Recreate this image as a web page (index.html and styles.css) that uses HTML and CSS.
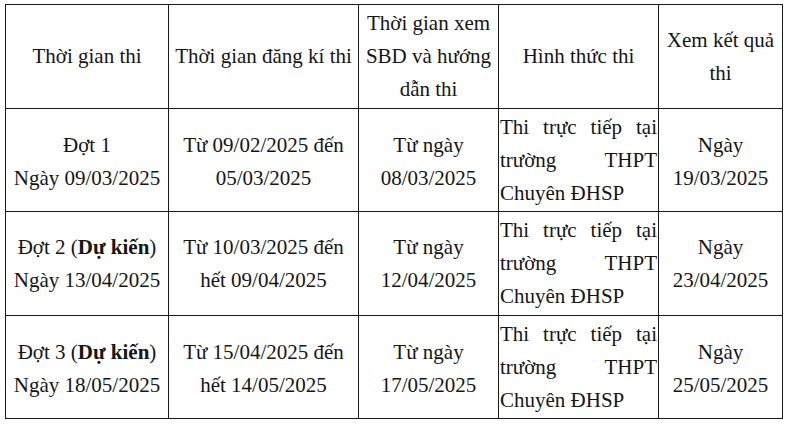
FILE: index.html
```html
<!DOCTYPE html>
<html lang="vi">
<head>
<meta charset="utf-8">
<link rel="stylesheet" href="styles.css">
</head>
<body>
<table class="schedule">
  <colgroup>
    <col class="c1"><col class="c2"><col class="c3"><col class="c4"><col class="c5">
  </colgroup>
  <tr class="head">
    <td>Thời gian thi</td>
    <td>Thời gian đăng kí thi</td>
    <td>Thời gian xem SBD và hướng dẫn thi</td>
    <td>Hình thức thi</td>
    <td>Xem kết quả thi</td>
  </tr>
  <tr class="short">
    <td>Đợt 1<br>Ngày 09/03/2025</td>
    <td>Từ 09/02/2025 đến<br>05/03/2025</td>
    <td>Từ ngày<br>08/03/2025</td>
    <td class="just">Thi trực tiếp tại trường THPT Chuyên ĐHSP</td>
    <td>Ngày<br>19/03/2025</td>
  </tr>
  <tr class="tall">
    <td>Đợt 2 (<b>Dự kiến</b>)<br>Ngày 13/04/2025</td>
    <td>Từ 10/03/2025 đến<br>hết 09/04/2025</td>
    <td>Từ ngày<br>12/04/2025</td>
    <td class="just">Thi trực tiếp tại trường THPT Chuyên ĐHSP</td>
    <td>Ngày<br>23/04/2025</td>
  </tr>
  <tr class="short">
    <td>Đợt 3 (<b>Dự kiến</b>)<br>Ngày 18/05/2025</td>
    <td>Từ 15/04/2025 đến<br>hết 14/05/2025</td>
    <td>Từ ngày<br>17/05/2025</td>
    <td class="just">Thi trực tiếp tại trường THPT Chuyên ĐHSP</td>
    <td>Ngày<br>25/05/2025</td>
  </tr>
</table>
</body>
</html>
```

FILE: styles.css
```css
html, body {
  margin: 0;
  padding: 0;
  background: #fff;
}
body {
  padding: 4px 0 0 5px;
  font-family: "Liberation Serif", "Times New Roman", serif;
  color: #151515;
}
.schedule {
  border-collapse: collapse;
  table-layout: fixed;
  width: 777px;
  font-size: 21px;
  line-height: 33px;
}
.c1 { width: 163px; }
.c2 { width: 190px; }
.c3 { width: 140px; }
.c4 { width: 160px; }
.c5 { width: 124px; }
.schedule td {
  border: 1px solid #1a1a1a;
  text-align: center;
  vertical-align: middle;
  padding: 0 2px;
  box-sizing: border-box;
}
.head td,
.tall td {
  height: 104px;
}
.short td {
  height: 103px;
  padding-top: 3px;
}
.schedule td.just {
  text-align: justify;
  padding: 0 1px;
}
.schedule b {
  font-weight: bold;
}
```
